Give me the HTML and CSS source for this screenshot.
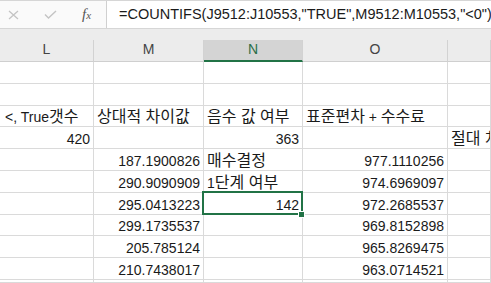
FILE: index.html
```html
<!DOCTYPE html>
<html lang="ko">
<head>
    <meta charset="UTF-8">
    <title>Sheet</title>
    <link rel="stylesheet" href="styles.css">
</head>
<body>
    <div class="formula-bar">
        <div class="fx-tools">
            <svg class="tool" width="11" height="10" viewBox="0 0 11 10">
                <path d="M1 1 L10 9 M10 1 L1 9" stroke="#c4c4c4" stroke-width="1.3" fill="none"/>
            </svg>
            <svg class="tool" width="13" height="9" viewBox="0 0 13 9">
                <path d="M1 4.5 L4.5 8 L12 1" stroke="#c4c4c4" stroke-width="1.4" fill="none"/>
            </svg>
            <span class="fx-label"><i>f</i><span class="fx-sub">x</span></span>
        </div>
        <div class="formula-input">=COUNTIFS(J9512:J10553,"TRUE",M9512:M10553,"&lt;0")</div>
    </div>
    <div class="gap"></div>

    <div class="sheet">
        <div class="col-head">L</div>
        <div class="col-head">M</div>
        <div class="col-head active">N</div>
        <div class="col-head">O</div>
        <div class="col-head"></div>

        <!-- row 1 -->
        <div class="cell"></div><div class="cell"></div><div class="cell"></div><div class="cell"></div><div class="cell"></div>
        <!-- row 2 -->
        <div class="cell"></div><div class="cell"></div><div class="cell"></div><div class="cell"></div><div class="cell"></div>
        <!-- row 3 -->
        <div class="cell shift">&lt;, True<span class="ko">갯수</span></div>
        <div class="cell"><span class="ko">상대적 차이값</span></div>
        <div class="cell"><span class="ko">음수 값 여부</span></div>
        <div class="cell"><span class="ko">표준편차</span>&nbsp;+&nbsp;<span class="ko">수수료</span></div>
        <div class="cell"></div>
        <!-- row 4 -->
        <div class="cell num">420</div>
        <div class="cell"></div>
        <div class="cell num">363</div>
        <div class="cell"></div>
        <div class="cell"><span class="ko">절대 차</span></div>
        <!-- row 5 -->
        <div class="cell"></div>
        <div class="cell num">187.1900826</div>
        <div class="cell"><span class="ko">매수결정</span></div>
        <div class="cell num">977.1110256</div>
        <div class="cell"></div>
        <!-- row 6 -->
        <div class="cell"></div>
        <div class="cell num">290.9090909</div>
        <div class="cell">1<span class="ko">단계 여부</span></div>
        <div class="cell num">974.6969097</div>
        <div class="cell"></div>
        <!-- row 7 -->
        <div class="cell"></div>
        <div class="cell num">295.0413223</div>
        <div class="cell num selected">142</div>
        <div class="cell num">972.2685537</div>
        <div class="cell"></div>
        <!-- row 8 -->
        <div class="cell"></div>
        <div class="cell num">299.1735537</div>
        <div class="cell"></div>
        <div class="cell num">969.8152898</div>
        <div class="cell"></div>
        <!-- row 9 -->
        <div class="cell"></div>
        <div class="cell num">205.785124</div>
        <div class="cell"></div>
        <div class="cell num">965.8269475</div>
        <div class="cell"></div>
        <!-- row 10 -->
        <div class="cell"></div>
        <div class="cell num">210.7438017</div>
        <div class="cell"></div>
        <div class="cell num">963.0714521</div>
        <div class="cell"></div>
        <!-- row 11, only its top edge shows -->
        <div class="cell"></div><div class="cell"></div><div class="cell"></div><div class="cell"></div><div class="cell"></div>
    </div>
</body>
</html>
```

FILE: styles.css
```css
html, body {
    overflow: hidden;
}
body {
    margin: 0;
    width: 491px;
    height: 283px;
    background: #ffffff;
    font-family: "Liberation Sans", "Noto Sans CJK KR", sans-serif;
    color: #1a1a1a;
}
.formula-bar {
    display: flex;
    height: 29px;
    box-sizing: border-box;
    border-top: 1px solid #d6d6d6;
    border-bottom: 1px solid #d6d6d6;
    background: #ffffff;
}
.fx-tools {
    width: 106px;
    display: flex;
    align-items: center;
    border-right: 1px solid #d0d0d0;
    background: #fafafa;
}
.tool {
    margin-left: 8px;
}
.tool + .tool {
    margin-left: 25px;
}
.fx-label {
    margin-left: 25px;
    font-family: "Liberation Serif", serif;
    font-size: 15px;
    color: #555555;
}
.fx-sub {
    font-size: 11px;
    font-style: italic;
}
.formula-input {
    flex: 1;
    padding-left: 12px;
    font-size: 14.5px;
    line-height: 26px;
    white-space: nowrap;
    overflow: hidden;
}
.gap {
    height: 11px;
    background: #ececec;
}
.sheet {
    display: grid;
    grid-template-columns: 94px 110px 99px 145px 1fr;
    grid-template-rows: 22px repeat(10, 21.8px) 3px;
}
.col-head {
    box-sizing: border-box;
    background: #ececec;
    border-right: 1px solid #d2d2d2;
    border-bottom: 1px solid #cfcfcf;
    color: #444444;
    font-size: 14px;
    text-align: center;
    line-height: 19px;
}
.col-head.active {
    background: #d4d4d4;
    color: #2b6e48;
    border-bottom: 2px solid #217346;
}
.cell {
    box-sizing: border-box;
    display: flex;
    align-items: flex-end;
    padding: 0 3px 1px;
    border-right: 1px solid #dadada;
    border-bottom: 1px solid #dadada;
    font-size: 14px;
    line-height: 16px;
    white-space: nowrap;
    overflow: hidden;
}
.ko {
    font-size: 16px;
    white-space: pre;
}
.cell.num {
    justify-content: flex-end;
}
.cell.shift {
    padding-left: 5px;
}
.cell.selected {
    position: relative;
    overflow: visible;
}
.cell.selected::after {
    content: "";
    position: absolute;
    top: -2px;
    left: -2px;
    right: -1px;
    bottom: -1px;
    border: 2px solid #217346;
}
.cell.selected::before {
    content: "";
    position: absolute;
    right: -3px;
    bottom: -4px;
    width: 5px;
    height: 5px;
    background: #217346;
    border: 1px solid #ffffff;
    z-index: 1;
}
```
